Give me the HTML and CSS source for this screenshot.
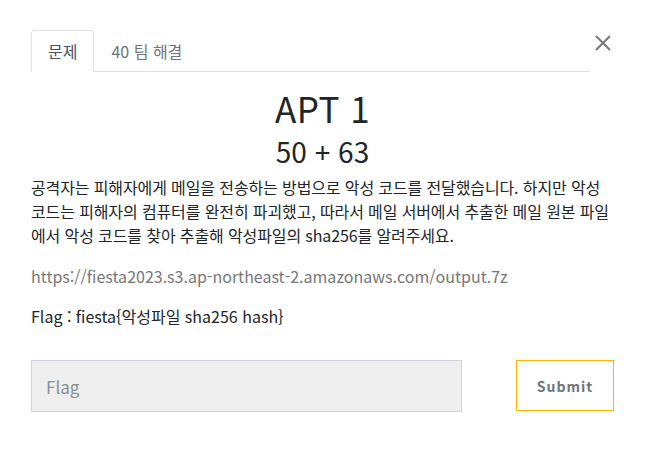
FILE: index.html
```html
<!DOCTYPE html>
<html lang="ko">
<head>
<meta charset="utf-8">
<link rel="stylesheet" href="styles.css">
</head>
<body>
<div class="modal">
  <button class="close" aria-label="close">
    <svg width="18" height="18" viewBox="0 0 18 18"><path d="M2 2 L16 16 M16 2 L2 16" stroke="#7a7a7a" stroke-width="2" fill="none"/></svg>
  </button>
  <ul class="nav">
    <li class="tab active">문제</li>
    <li class="tab">40 팀 해결</li>
  </ul>
  <h3 class="title">APT 1</h3>
  <h4 class="value">50 + 63</h4>
  <p class="desc">공격자는 피해자에게 메일을 전송하는 방법으로 악성 코드를 전달했습니다. 하지만 악성 코드는 피해자의 컴퓨터를 완전히 파괴했고, 따라서 메일 서버에서 추출한 메일 원본 파일에서 악성 코드를 찾아 추출해 악성파일의 sha256를 알려주세요.</p>
  <p class="link">https://fiesta2023.s3.ap-northeast-2.amazonaws.com/output.7z</p>
  <p class="flag">Flag : fiesta{악성파일 sha256 hash}</p>
  <form class="form">
    <input class="input" type="text" placeholder="Flag">
    <button class="submit" type="button">Submit</button>
  </form>
</div>
</body>
</html>
```
FILE: styles.css
```css
html, body {
  margin: 0;
  padding: 0;
  background: #ffffff;
}
body {
  font-family: "Noto Sans CJK KR", "Noto Sans", sans-serif;
  color: #212529;
}
.modal {
  position: relative;
  padding: 30px 31px 0 31px;
}
.close {
  position: absolute;
  top: 34px;
  right: 33px;
  width: 18px;
  height: 18px;
  padding: 0;
  border: 0;
  background: transparent;
  line-height: 0;
}
.nav {
  list-style: none;
  margin: 0 24px 0 0;
  padding: 0;
  display: flex;
  border-bottom: 1px solid #dee2e6;
  height: 41px;
}
.tab {
  font-size: 16px;
  color: #6c757d;
  padding: 0 16px;
  line-height: 40px;
  border: 1px solid transparent;
  border-bottom: 0;
  border-radius: 4px 4px 0 0;
  margin-bottom: -1px;
}
.tab.active {
  color: #495057;
  border-color: #dee2e6;
  background: #fff;
  height: 41px;
}
.title {
  margin: 16px 0 0 0;
  text-align: center;
  font-size: 35px;
  font-weight: 400;
  line-height: 40px;
  letter-spacing: 0.5px;
}
.value {
  margin: 6px 0 0 0;
  text-align: center;
  font-size: 28px;
  font-weight: 400;
  line-height: 34px;
}
.desc {
  margin: 7px -3px 0 0;
  font-size: 16px;
  line-height: 24px;
  letter-spacing: -0.12px;
}
.link {
  margin: 17px 0 0 0;
  font-size: 16px;
  line-height: 24px;
  color: #777777;
}
.flag {
  margin: 16px 0 0 0;
  font-size: 16px;
  line-height: 24px;
}
.form {
  margin: 32px 0 0 0;
  display: flex;
  justify-content: space-between;
  align-items: flex-start;
}
.input {
  box-sizing: border-box;
  width: 431px;
  height: 52px;
  border: 1px solid #ced4da;
  background: #efefef;
  padding: 0 14px;
  font-family: inherit;
  font-size: 17px;
  color: #495057;
  border-radius: 0;
  outline: none;
}
.input::placeholder {
  color: #868e96;
}
.submit {
  box-sizing: border-box;
  width: 98px;
  height: 51px;
  border: 1px solid #ffb400;
  background: #fff;
  font-family: inherit;
  font-size: 14px;
  font-weight: 700;
  letter-spacing: 1px;
  color: #6c757d;
  border-radius: 0;
}
```
